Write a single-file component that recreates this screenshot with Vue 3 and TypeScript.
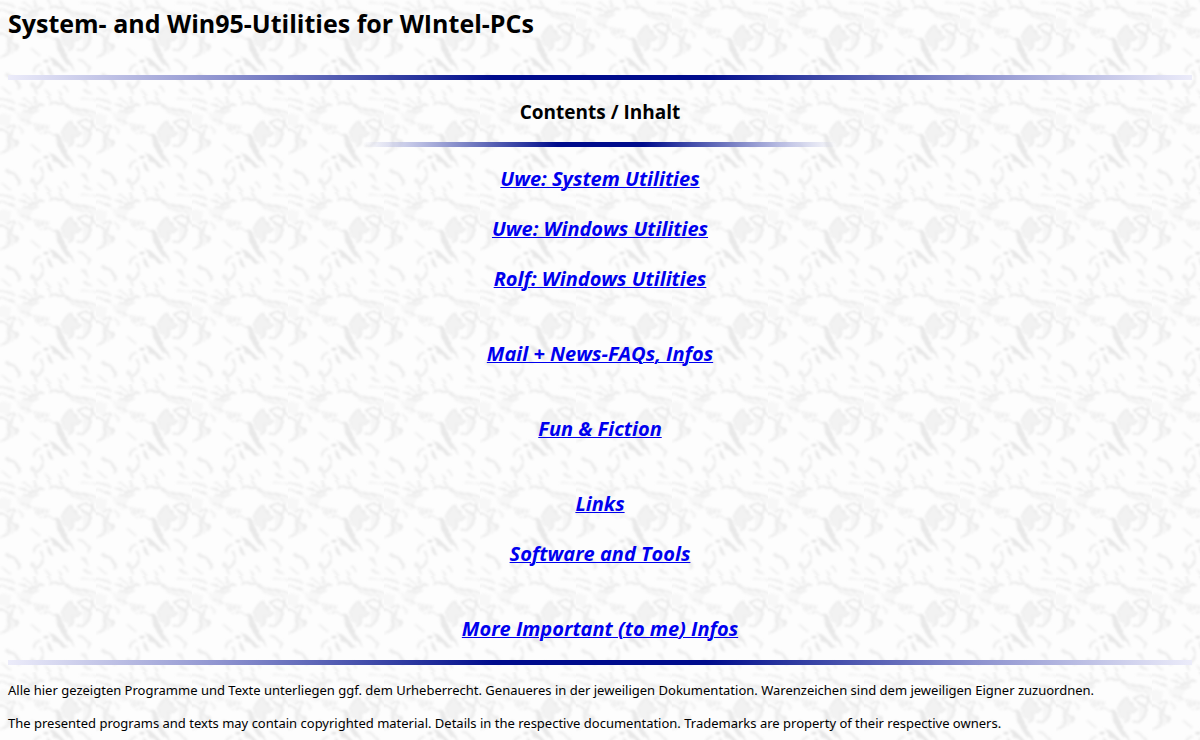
<script setup lang="ts">
interface ContentLink {
  label: string
  href: string
}

const groups: ContentLink[][] = [
  [
    { label: 'Uwe: System Utilities', href: '#uwe-system' },
    { label: 'Uwe: Windows Utilities', href: '#uwe-windows' },
    { label: 'Rolf: Windows Utilities', href: '#rolf-windows' },
  ],
  [{ label: 'Mail + News-FAQs, Infos', href: '#mail-news' }],
  [{ label: 'Fun & Fiction', href: '#fun' }],
  [
    { label: 'Links', href: '#links' },
    { label: 'Software and Tools', href: '#software' },
  ],
  [{ label: 'More Important (to me) Infos', href: '#infos' }],
]
</script>

<template>
  <div class="page">
    <svg class="marble" aria-hidden="true">
      <defs>
        <filter id="soft" filterUnits="userSpaceOnUse" x="-12" y="-12" width="312" height="312">
          <feTurbulence type="fractalNoise" baseFrequency="0.06" numOctaves="2" seed="4" result="noise" />
          <feDisplacementMap in="SourceGraphic" in2="noise" scale="12" xChannelSelector="R" yChannelSelector="G" />
          <feGaussianBlur stdDeviation="2.4" />
        </filter>
        <pattern id="tile" width="96" height="96" patternUnits="userSpaceOnUse" viewBox="0 0 288 288">
          <g filter="url(#soft)" fill="none" stroke="#e6e6e6" stroke-width="7" stroke-linecap="round" stroke-linejoin="round">
            <!-- broad shading under the veins -->
            <path d="M-12 60Q14 42 34 62L28 92L-12 84ZM44 50L100 46L86 88L58 76ZM200 24L262 50L300 58L300 74L270 62L214 48Z" fill="#f7f7f7" stroke="none" />
            <path d="M36 98Q22 122 54 138L44 158L14 170L22 112ZM248 106L276 86L270 136L250 152ZM102 82L152 88L146 100L108 104Z" fill="#f6f6f6" stroke="none" />
            <!-- feathered veins, top left -->
            <path d="M-12 8Q20 8 44 22M60 24L112 44M70 8L98 24M-12 30Q24 28 46 44M68 44L108 50M62 70L94 82" stroke="#ebebeb" stroke-width="5" />
            <!-- crest -->
            <path d="M88 42Q98 30 112 34Q116 22 130 28M150 24Q164 14 176 24Q190 20 202 32Q220 44 242 40Q262 42 300 54" stroke="#ebebeb" />
            <path d="M176 10Q190 10 196 22M214 48Q240 60 262 54Q280 60 276 76M246 8Q270 16 300 8" stroke="#f1f1f1" stroke-width="5" />
            <!-- folds at the sides -->
            <path d="M24 96Q36 86 46 94M38 100Q28 112 38 126Q54 132 50 148M-12 102Q12 96 20 112Q32 124 22 140Q34 154 18 164L2 174" stroke="#ebebeb" />
            <path d="M58 92L68 108" stroke="#f3f3f3" stroke-width="10" />
            <!-- short hatching -->
            <path d="M102 82L104 100M114 86L116 102M126 88L127 100M138 88L142 98M120 112Q138 104 158 112" stroke="#eaeaea" stroke-width="4" />
            <!-- mask and eye -->
            <path d="M186 108Q196 84 214 74Q218 94 242 110Q246 116 238 120L220 122L220 140Q214 154 204 146Q194 134 186 108Z" fill="#f2f2f2" stroke="#ebebeb" stroke-width="5" />
            <path d="M236 80Q256 66 276 80Q278 96 264 104Q246 96 236 80" stroke="#e6e6e6" stroke-width="6" />
            <path d="M270 106Q272 126 258 142Q246 156 232 148M282 88L296 104" stroke="#ebebeb" />
            <path d="M254 82L268 82L264 94L256 92Z" fill="#fdfdfd" stroke="none" />
            <!-- spikes -->
            <path d="M160 112Q172 108 182 126Q198 160 226 212Q204 194 186 176Q174 148 160 112Z" fill="#e8e8e8" stroke="none" />
            <path d="M148 168Q160 170 178 190L206 216Q188 214 172 202Q156 190 148 168Z" fill="#e6e6e6" stroke="none" />
            <path d="M134 184L142 183" stroke="#e2e2e2" stroke-width="8" />
            <path d="M140 202Q148 196 154 210L160 232Q146 228 140 202Z" fill="#e8e8e8" stroke="none" />
            <path d="M116 194Q102 200 102 214M122 214Q132 226 126 240Q128 252 114 262Q100 264 96 250" stroke="#ededed" stroke-width="8" />
            <path d="M96 148L118 166M194 122L208 152" stroke="#f2f2f2" stroke-width="8" />
            <!-- loose flecks -->
            <path d="M22 224Q44 232 54 250Q62 258 56 266" stroke="#ebebeb" stroke-width="8" />
            <path d="M236 178Q256 186 266 200Q270 208 266 214" stroke="#eeeeee" stroke-width="8" />
            <path d="M246 234Q256 242 262 252M252 270L274 282M194 258L204 274M6 264L30 280" stroke="#eeeeee" stroke-width="7" />
            <path d="M110 282Q102 272 108 266M136 270L150 286M176 276L184 286M104 2Q102 12 110 22M144 0L152 14M178 0L186 12" stroke="#f0f0f0" stroke-width="8" />
          </g>
        </pattern>
      </defs>
      <rect width="100%" height="100%" fill="url(#tile)" />
    </svg>

    <header>
      <h1>System- and Win95-Utilities for WIntel-PCs</h1>
      <hr class="rule" />
    </header>

    <main>
      <h2>Contents / Inhalt</h2>
      <hr class="rule short" />
      <nav aria-label="Contents">
        <ul v-for="(group, index) in groups" :key="index">
          <li v-for="link in group" :key="link.href">
            <a :href="link.href">{{ link.label }}</a>
          </li>
        </ul>
      </nav>
    </main>

    <footer>
      <hr class="rule" />
      <p>Alle hier gezeigten Programme und Texte unterliegen ggf. dem Urheberrecht. Genaueres in der jeweiligen Dokumentation. Warenzeichen sind dem jeweiligen Eigner zuzuordnen.</p>
      <p>The presented programs and texts may contain copyrighted material. Details in the respective documentation. Trademarks are property of their respective owners.</p>
    </footer>
  </div>
</template>

<style>
body {
  margin: 0;
  background: #fdfdfd;
}
</style>

<style scoped>
.page {
  position: relative;
  z-index: 0;
  box-sizing: border-box;
  min-height: 100vh;
  padding: 8px 8px 6px;
  color: #000;
  font-family: "Segoe UI", "Open Sans", "Noto Sans", sans-serif;
}

.marble {
  position: absolute;
  inset: 0;
  z-index: -1;
  width: 100%;
  height: 100%;
}

h1 {
  margin: 0 0 37px;
  font-size: 25px;
  line-height: 30px;
}

.rule {
  height: 5px;
  margin: 0;
  border: 0;
  background: linear-gradient(90deg, #ececfa, #8e93cf 18%, #2c389f 34%, #000c8c 41%, #000c8c 59%, #2c389f 66%, #8e93cf 82%, #ececfa);
}

.rule.short {
  width: 40%;
  margin: 0 auto;
  background: linear-gradient(90deg, #d8daf000, #b8bce2 12%, #3a45a6 32%, #000c8c 41%, #000c8c 59%, #3a45a6 68%, #b8bce2 88%, #d8daf000);
}

h2 {
  margin: 20px 0 17px;
  font-size: 19px;
  line-height: 25px;
  text-align: center;
}

nav {
  display: flex;
  flex-direction: column;
  gap: 50px;
  margin: 19px 0;
}

ul {
  display: flex;
  flex-direction: column;
  align-items: center;
  gap: 25px;
  margin: 0;
  padding: 0;
  list-style: none;
}

li {
  height: 25px;
  line-height: 25px;
}

a {
  color: #0000ee;
  font-size: 20px;
  font-style: italic;
  font-weight: 700;
  line-height: 25px;
  text-decoration: underline;
  text-decoration-thickness: 1px;
}

p {
  margin: 13px 0 0;
  font-family: "Segoe UI", "Noto Sans", "Open Sans", sans-serif;
  font-size: 13px;
  line-height: 20px;
}

.rule + p {
  margin-top: 15px;
}
</style>
